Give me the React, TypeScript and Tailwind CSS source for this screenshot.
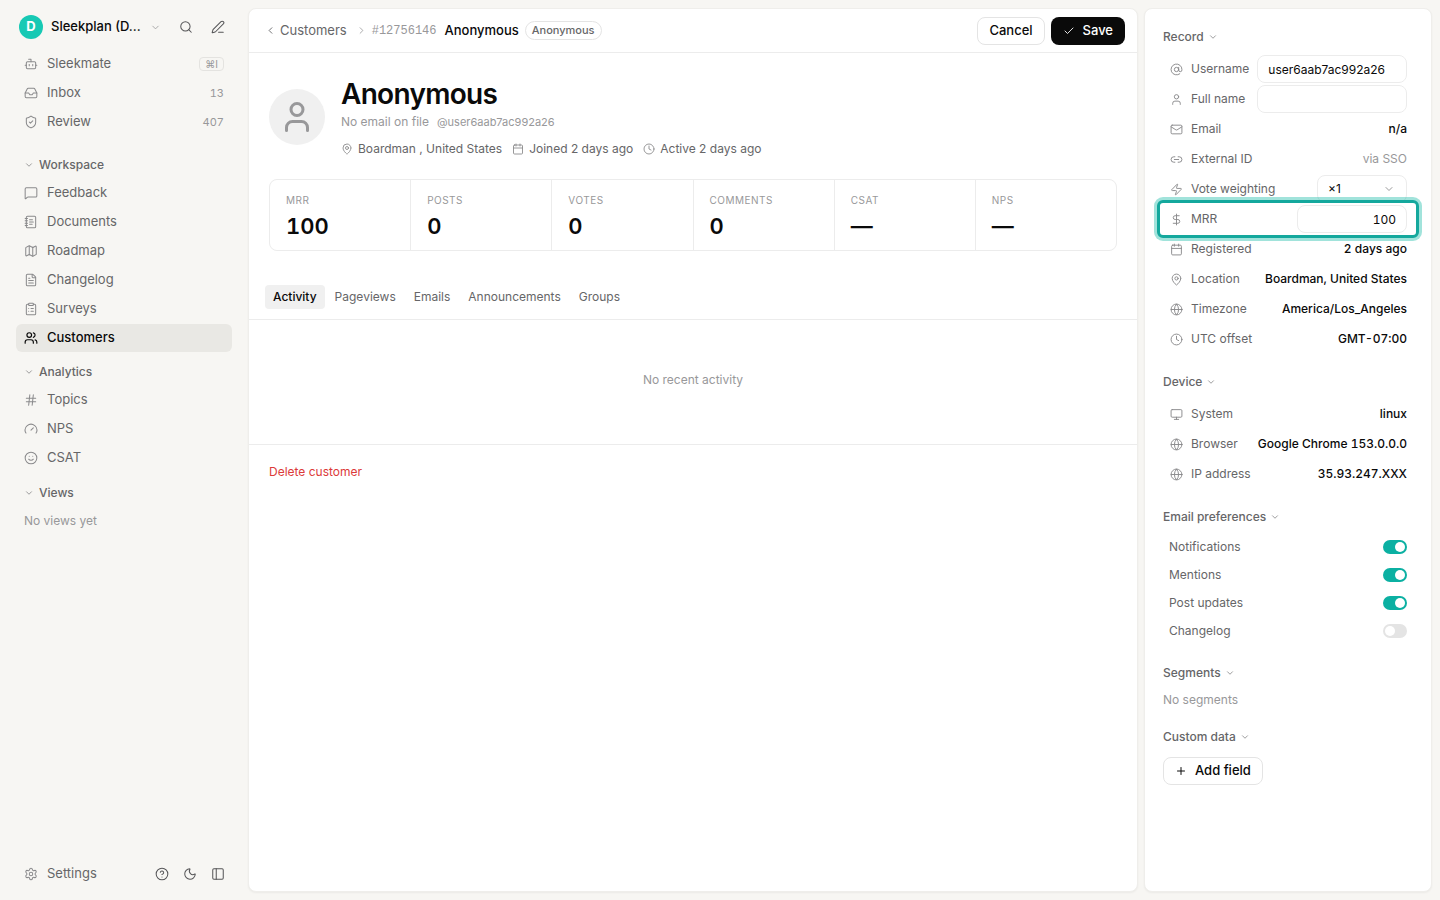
import { useState } from "react";
import type { ReactNode } from "react";
import {
  AtSign,
  Bot,
  Calendar,
  Check,
  ChevronDown,
  ChevronLeft,
  ChevronRight,
  ClipboardList,
  Clock,
  DollarSign,
  FileText,
  Gauge,
  Globe,
  Hash,
  HelpCircle,
  Inbox,
  Link2,
  Mail,
  Map,
  MapPin,
  MessageSquare,
  Monitor,
  Moon,
  NotebookText,
  PanelLeft,
  PenLine,
  Plus,
  Search,
  Settings,
  ShieldCheck,
  Smile,
  User,
  Users,
  Zap,
} from "lucide-react";
import type { LucideIcon } from "lucide-react";

type NavEntry = { icon: LucideIcon; label: string; count?: string; shortcut?: string; active?: boolean };

const topNav: NavEntry[] = [
  { icon: Bot, label: "Sleekmate", shortcut: "⌘I" },
  { icon: Inbox, label: "Inbox", count: "13" },
  { icon: ShieldCheck, label: "Review", count: "407" },
];

const workspaceNav: NavEntry[] = [
  { icon: MessageSquare, label: "Feedback" },
  { icon: NotebookText, label: "Documents" },
  { icon: Map, label: "Roadmap" },
  { icon: FileText, label: "Changelog" },
  { icon: ClipboardList, label: "Surveys" },
  { icon: Users, label: "Customers", active: true },
];

const analyticsNav: NavEntry[] = [
  { icon: Hash, label: "Topics" },
  { icon: Gauge, label: "NPS" },
  { icon: Smile, label: "CSAT" },
];

const stats = [
  { label: "MRR", value: "100" },
  { label: "Posts", value: "0" },
  { label: "Votes", value: "0" },
  { label: "Comments", value: "0" },
  { label: "CSAT", value: "—" },
  { label: "NPS", value: "—" },
];

const tabs = ["Activity", "Pageviews", "Emails", "Announcements", "Groups"];

function NavItem({ icon: Icon, label, count, shortcut, active }: NavEntry) {
  return (
    <li>
      <a
        href="#"
        aria-current={active ? "page" : undefined}
        className={`flex h-7 items-center gap-2 rounded-md px-2 text-[13px] ${
          active ? "bg-[#e9e8e4] font-medium text-[#0a0a0a]" : "text-[#666668]"
        }`}
      >
        <Icon size={14} strokeWidth={active ? 2 : 1.75} className={active ? "" : "text-[#8a8a8c]"} />
        <span className="ml-px flex-1">{label}</span>
        {count && <span className="text-[11px] text-[#98989a] tabular-nums">{count}</span>}
        {shortcut && (
          <kbd className="rounded border border-[#e4e3e0] px-[5px] font-[Inter] text-[10px] leading-3 text-[#98989a]">
            {shortcut}
          </kbd>
        )}
      </a>
    </li>
  );
}

function NavHeading({ children }: { children: ReactNode }) {
  return (
    <h2>
      <button className="flex h-7 items-center gap-1 px-2 text-xs font-medium text-[#666668]">
        <ChevronDown size={10} strokeWidth={2} className="text-[#8a8a8c]" />
        <span className="ml-px">{children}</span>
      </button>
    </h2>
  );
}

function NavList({ items }: { items: NavEntry[] }) {
  return (
    <ul className="flex flex-col gap-px">
      {items.map((item) => (
        <NavItem key={item.label} {...item} />
      ))}
    </ul>
  );
}

function Sidebar() {
  return (
    <nav className="flex w-62 shrink-0 flex-col px-4 pt-[13px] pb-3">
      <div className="mb-[9px] flex h-7 items-center">
        <button className="flex min-w-0 flex-1 items-center gap-2 pl-[3px] text-left">
          <span className="flex size-6 shrink-0 items-center justify-center rounded-full bg-[#17c9b4] text-[13px] font-bold text-white">
            D
          </span>
          <span className="text-[13px] font-medium whitespace-nowrap text-[#0a0a0a]">Sleekplan (D...</span>
          <ChevronDown size={11} strokeWidth={1.75} className="ml-px text-[#98989a]" />
        </button>
        <button aria-label="Search" className="flex size-7 items-center justify-center text-[#555557]">
          <Search size={14} strokeWidth={1.75} />
        </button>
        <button aria-label="Compose" className="ml-1 flex size-7 items-center justify-center text-[#555557]">
          <PenLine size={14} strokeWidth={1.75} />
        </button>
      </div>

      <NavList items={topNav} />
      <section className="mt-[15px]">
        <NavHeading>Workspace</NavHeading>
        <NavList items={workspaceNav} />
      </section>
      <section className="mt-[6px]">
        <NavHeading>Analytics</NavHeading>
        <NavList items={analyticsNav} />
      </section>
      <section className="mt-[7px]">
        <NavHeading>Views</NavHeading>
        <p className="px-2 text-xs leading-7 text-[#98989a]">No views yet</p>
      </section>

      <div className="mt-auto flex items-center">
        <a href="#" className="flex h-7 flex-1 items-center gap-2 px-2 text-[13px] text-[#666668]">
          <Settings size={14} strokeWidth={1.75} className="text-[#8a8a8c]" />
          <span className="ml-px">Settings</span>
        </a>
        <button aria-label="Help" className="flex size-7 items-center justify-center text-[#555557]">
          <HelpCircle size={14} strokeWidth={1.75} />
        </button>
        <button aria-label="Dark mode" className="flex size-7 items-center justify-center text-[#555557]">
          <Moon size={14} strokeWidth={1.75} />
        </button>
        <button aria-label="Collapse sidebar" className="flex size-7 items-center justify-center text-[#555557]">
          <PanelLeft size={14} strokeWidth={1.75} />
        </button>
      </div>
    </nav>
  );
}

function TopBar() {
  return (
    <header className="flex h-11 items-center border-b border-[#ececec] pr-3 pl-4">
      <a href="#" className="flex items-center gap-1 text-[13px] text-[#666668]">
        <ChevronLeft size={11} strokeWidth={2} />
        Customers
      </a>
      <ChevronRight size={11} strokeWidth={1.75} className="mr-[5px] ml-[9px] text-[#98989a]" />
      <span className="font-['Liberation_Mono',monospace] text-xs text-[#98989a]">#12756146</span>
      <h1 className="ml-2 text-[13px] font-medium text-[#0a0a0a]">Anonymous</h1>
      <span className="ml-1.5 rounded-full border border-[#e4e4e4] px-1.5 text-[11px] leading-[17px] font-medium text-[#666668]">
        Anonymous
      </span>
      <div className="ml-auto flex gap-1.5">
        <button className="h-7 rounded-lg border border-[#e4e4e4] px-[11px] text-[13px] font-medium text-[#0a0a0a]">
          Cancel
        </button>
        <button className="flex h-7 items-center gap-2 rounded-lg bg-[#0a0a0a] px-3 text-[13px] font-medium text-white">
          <Check size={12} strokeWidth={1.75} />
          Save
        </button>
      </div>
    </header>
  );
}

function Profile() {
  return (
    <section className="flex items-center gap-4 px-5 pt-6">
      <div className="flex size-14 shrink-0 items-center justify-center rounded-full bg-[#f0f0f0] text-[#98989a]">
        <User size={36} strokeWidth={2} />
      </div>
      <div>
        <h2 className="text-[28px] leading-[34px] font-semibold tracking-tight text-[#0a0a0a]">Anonymous</h2>
        <p className="mt-0.5 flex items-center gap-2 leading-[18px] text-[#98989a]">
          <span className="text-xs">No email on file</span>
          <span className="text-[11px]">@user6aab7ac992a26</span>
        </p>
        <ul className="mt-[10px] flex gap-2.5 text-xs leading-4 text-[#666668]">
          <li className="flex items-center gap-[5px]">
            <MapPin size={12} strokeWidth={1.75} className="text-[#8a8a8c]" />
            Boardman , United States
          </li>
          <li className="flex items-center gap-[5px]">
            <Calendar size={12} strokeWidth={1.75} className="text-[#8a8a8c]" />
            Joined 2 days ago
          </li>
          <li className="flex items-center gap-[5px]">
            <Clock size={12} strokeWidth={1.75} className="text-[#8a8a8c]" />
            Active 2 days ago
          </li>
        </ul>
      </div>
    </section>
  );
}

function Main() {
  const [tab, setTab] = useState("Activity");
  return (
    <main className="min-w-0 flex-1 rounded-lg border border-[#efeeeb] bg-white shadow-xs">
      <TopBar />
      <Profile />
      <dl className="mx-5 mt-[22px] grid grid-cols-6 gap-px overflow-hidden rounded-lg border border-[#ececec] bg-[#ececec]">
        {stats.map((s) => (
          <div key={s.label} className="h-[70px] bg-white px-4 pt-3">
            <dt className="text-[10px] leading-4 tracking-wider text-[#98989a] uppercase">{s.label}</dt>
            <dd className="mt-1 text-[22px] leading-7 font-semibold text-[#0a0a0a] tabular-nums">{s.value}</dd>
          </div>
        ))}
      </dl>
      <div role="tablist" className="mt-[34px] flex gap-0.5 border-b border-[#ececec] px-4 pb-[10px]">
        {tabs.map((t) => (
          <button
            key={t}
            role="tab"
            aria-selected={t === tab}
            onClick={() => setTab(t)}
            className={`h-6 rounded px-2 text-xs ${
              t === tab ? "bg-[#f0f0f0] font-medium text-[#0a0a0a]" : "text-[#666668]"
            }`}
          >
            {t}
          </button>
        ))}
      </div>
      <div role="tabpanel" className="border-b border-[#ececec] pt-[51px] pb-[55px] text-center">
        <p className="text-xs leading-[18px] text-[#98989a]">No recent activity</p>
      </div>
      <button className="mx-5 mt-[18px] text-xs leading-[18px] text-[#dc3a3a]">Delete customer</button>
    </main>
  );
}

function GroupHeading({ children }: { children: ReactNode }) {
  return (
    <h3>
      <button className="flex h-5 items-center gap-1 text-xs font-medium text-[#666668]">
        {children}
        <ChevronDown size={10} strokeWidth={2} className="text-[#8a8a8c]" />
      </button>
    </h3>
  );
}

function Field({
  icon: Icon,
  label,
  htmlFor,
  highlight,
  children,
}: {
  icon: LucideIcon;
  label: string;
  htmlFor?: string;
  highlight?: boolean;
  children: ReactNode;
}) {
  return (
    <div className="relative flex h-[30px] items-center gap-2 pl-[7px]">
      {highlight && (
        <div className="absolute -inset-y-1 -right-3 -left-1.5 rounded-md border-3 border-[#14a89d] bg-white ring-3 ring-[#14b8a6]/40" />
      )}
      <Icon size={13} strokeWidth={1.75} className="relative shrink-0 text-[#8a8a8c]" />
      <label htmlFor={htmlFor} className="relative text-xs whitespace-nowrap text-[#666668]">
        {label}
      </label>
      <div className="relative ml-auto flex items-center">{children}</div>
    </div>
  );
}

function Value({ children }: { children: ReactNode }) {
  return <span className="text-xs font-medium whitespace-nowrap text-[#0a0a0a] tabular-nums">{children}</span>;
}

const inputClass = "h-7 rounded-lg border border-[#ececec] bg-white px-2.5 text-xs text-[#0a0a0a]";

function Toggle({ label, initial }: { label: string; initial: boolean }) {
  const [on, setOn] = useState(initial);
  return (
    <label className="flex h-7 items-center justify-between pl-1.5 text-xs text-[#666668]">
      {label}
      <input
        type="checkbox"
        role="switch"
        checked={on}
        onChange={() => setOn(!on)}
        className="flex h-3.5 w-6 appearance-none items-center rounded-full bg-[#e4e4e4] px-0.5 before:size-2.5 before:rounded-full before:bg-white checked:justify-end checked:bg-[#0bb0a2]"
      />
    </label>
  );
}

function Details() {
  return (
    <aside className="w-72 shrink-0 overflow-hidden rounded-lg border border-[#efeeeb] bg-white pt-[18px] pr-6 pl-[18px] shadow-xs">
      <section>
        <GroupHeading>Record</GroupHeading>
        <div className="mt-[7px]">
          <Field icon={AtSign} label="Username" htmlFor="username">
            <input id="username" defaultValue="user6aab7ac992a26" className={`${inputClass} w-[150px]`} />
          </Field>
          <Field icon={User} label="Full name" htmlFor="fullname">
            <input id="fullname" className={`${inputClass} w-[150px]`} />
          </Field>
          <Field icon={Mail} label="Email">
            <Value>n/a</Value>
          </Field>
          <Field icon={Link2} label="External ID">
            <span className="text-xs text-[#98989a]">via SSO</span>
          </Field>
          <Field icon={Zap} label="Vote weighting" htmlFor="weight">
            <select id="weight" className={`${inputClass} w-[90px] appearance-none`}>
              <option>×1</option>
              <option>×2</option>
            </select>
            <ChevronDown
              size={12}
              strokeWidth={1.75}
              className="pointer-events-none absolute right-3 text-[#8a8a8c]"
            />
          </Field>
          <Field icon={DollarSign} label="MRR" htmlFor="mrr" highlight>
            <input id="mrr" defaultValue="100" className={`${inputClass} w-[110px] text-right tabular-nums`} />
          </Field>
          <Field icon={Calendar} label="Registered">
            <Value>2 days ago</Value>
          </Field>
          <Field icon={MapPin} label="Location">
            <Value>Boardman, United States</Value>
          </Field>
          <Field icon={Globe} label="Timezone">
            <Value>America/Los_Angeles</Value>
          </Field>
          <Field icon={Clock} label="UTC offset">
            <Value>GMT-07:00</Value>
          </Field>
        </div>
      </section>
      <section className="mt-[18px]">
        <GroupHeading>Device</GroupHeading>
        <div className="mt-[7px]">
          <Field icon={Monitor} label="System">
            <Value>linux</Value>
          </Field>
          <Field icon={Globe} label="Browser">
            <Value>Google Chrome 153.0.0.0</Value>
          </Field>
          <Field icon={Globe} label="IP address">
            <Value>35.93.247.XXX</Value>
          </Field>
        </div>
      </section>
      <section className="mt-[18px]">
        <GroupHeading>Email preferences</GroupHeading>
        <div className="mt-[6px]">
          <Toggle label="Notifications" initial />
          <Toggle label="Mentions" initial />
          <Toggle label="Post updates" initial />
          <Toggle label="Changelog" initial={false} />
        </div>
      </section>
      <section className="mt-[18px]">
        <GroupHeading>Segments</GroupHeading>
        <p className="mt-2 text-xs leading-[18px] text-[#98989a]">No segments</p>
      </section>
      <section className="mt-[18px]">
        <GroupHeading>Custom data</GroupHeading>
        <button className="mt-[10px] flex h-7 items-center gap-2 rounded-lg border border-[#e4e4e4] px-[11px] text-[13px] font-medium text-[#0a0a0a]">
          <Plus size={12} strokeWidth={2} />
          Add field
        </button>
      </section>
    </aside>
  );
}

export default function App() {
  return (
    <div className="flex min-h-screen bg-[#f7f6f3] font-[Inter,sans-serif]">
      <Sidebar />
      <div className="flex min-w-0 flex-1 gap-1.5 py-2 pr-2">
        <Main />
        <Details />
      </div>
    </div>
  );
}
